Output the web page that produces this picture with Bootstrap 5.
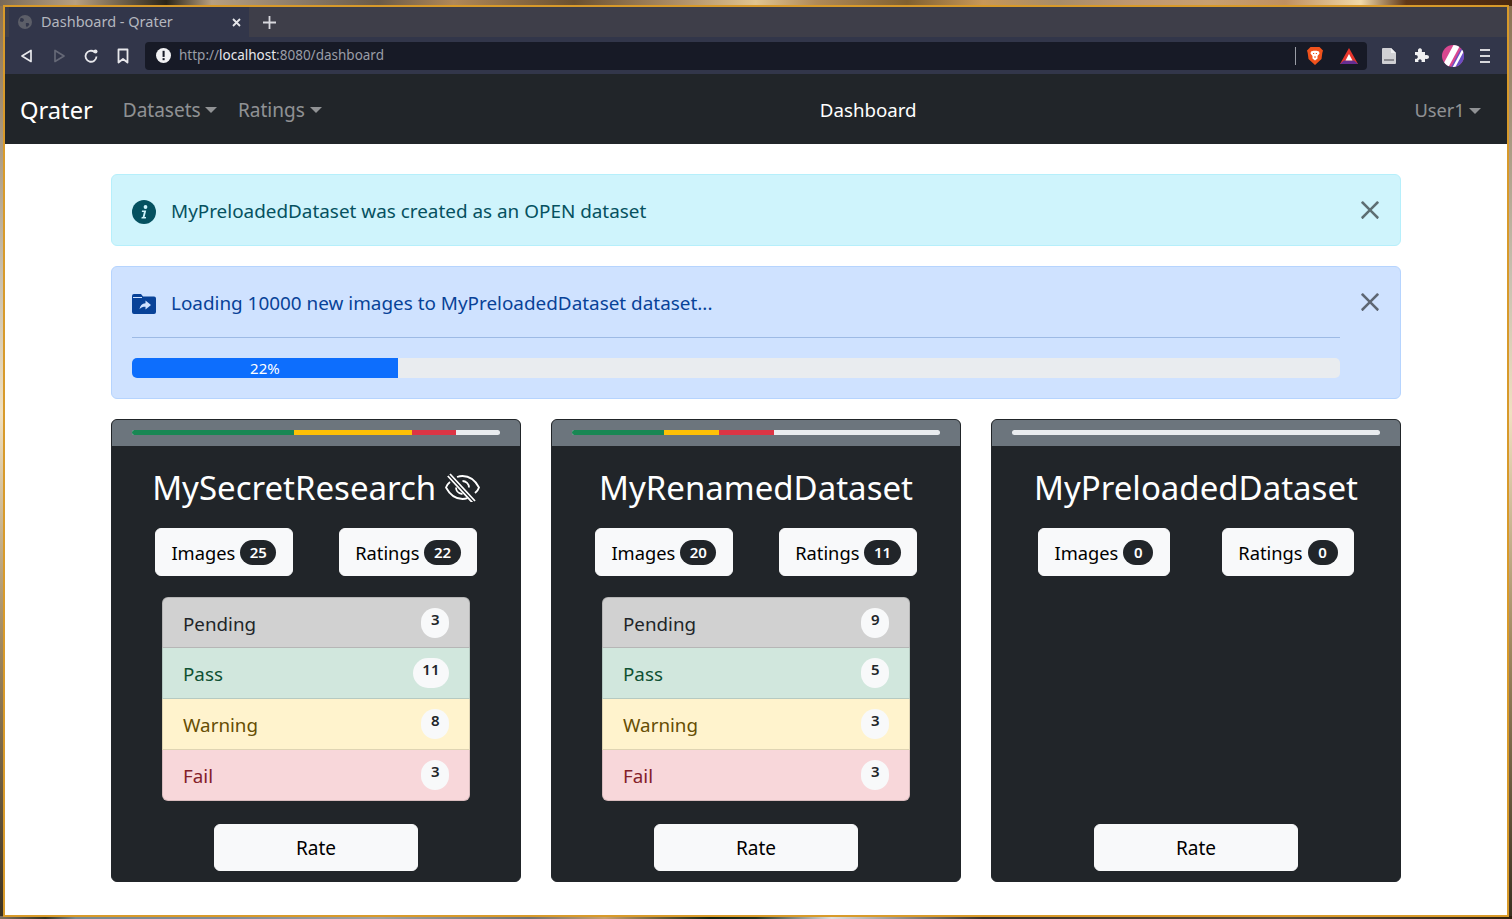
<!DOCTYPE html>
<html lang="en">
<head>
    <meta charset="UTF-8">
    <meta name="viewport" content="width=device-width, initial-scale=1.0">
    <title>Dashboard - Qrater</title>
    <link href="https://cdn.jsdelivr.net/npm/bootstrap@5.3.0/dist/css/bootstrap.min.css" rel="stylesheet">
    <style>
        html, body { height: 100%; }
        body {
            font-family: "Noto Sans", sans-serif;
            font-size: 19px;
            overflow: hidden;
            padding: 5px 3px 2px 3px;
            background:
                linear-gradient(90deg, #7a6a58 0%, #b8a080 5%, #2a2418 11%, #b8a080 14%, #8a7a68 20%, #6a5a48 25%, #b08858 30%, #6a5030 38%, #b09068 45%, #e0c490 50%, #b08a58 54%, #806030 60%, #c89858 65%, #a88c68 70%, #c09870 75%, #c8a070 80%, #c09060 85%, #f0d8a8 90%, #603818 93%, #4a2810 100%) top / 100% 6px no-repeat,
                linear-gradient(90deg, #807060 0%, #303020 3%, #7a8a90 5%, #808a98 15%, #a0a0a0 25%, #707070 35%, #c8a070 40%, #102010 47%, #203020 50%, #e0e0e0 55%, #3a3028 65%, #504030 75%, #605040 85%, #302010 100%) bottom / 100% 3px no-repeat,
                linear-gradient(180deg, #8a7050 0%, #c8c0b0 30%, #f0e0c0 45%, #a08860 70%, #3a3020 100%);
        }
        .app-window {
            height: 100%;
            border: 2px solid #d89a2a;
            background: #fff;
            overflow: hidden;
            display: flex;
            flex-direction: column;
        }
        .tab-strip { height: 30px; background: #3e3e49; }
        .tab-active {
            width: 240px; margin-left: 4px; padding: 0 8px 0 9px; height: 30px;
            background: #32364a; color: #b4b6bf; font-size: 14.5px;
        }
        .tab-new { width: 40px; }
        .tab-globe { margin-right: 9px; }
        .tool-bar { height: 37px; background: #32364a; padding: 0 17px 0 14px; }
        .url-box {
            height: 28px; background: #171a26; border-radius: 4px; color: #9a9da6;
            font-size: 13.5px; padding: 0 9px 0 11px; margin-left: 14px;
        }
        .url-box b { font-weight: 400; color: #e8e8ec; }
        .url-sep { width: 1px; height: 18px; background: #9a9da6; margin-right: 11px; }
        .ico-bat { margin-left: 17px; }
        .ico-page { margin-left: 15px; }
        .ico-puzzle { margin-left: 18px; }
        .ico-avatar { margin-left: 13px; }
        .ico-menu { margin-left: 16px; }
        .app-nav { height: 70px; padding: 2px 15px 0 15px; background: #212529; }
        .app-nav .navbar-brand { font-size: 23.7px; padding: 2px 0 0; margin-right: 20px; color: #fff; }
        .app-nav .nav-link { color: rgba(255,255,255,.5); padding: 0 10.5px 0 10px; font-size: 19px; }
        .app-nav .dropdown-toggle::after { vertical-align: .2em; border-top-width: .33em; border-left-width: .33em; border-right-width: .33em; }
        .app-nav .user-link { font-size: 18.3px; }
        .nav-title { color: #fff; font-size: 18.7px; }
        .page-wrap { width: 1290px; margin: 30px auto 0; }
        .note-box {
            font-size: 18.9px; border-radius: 6px; padding: 21px 20px 20px; margin-bottom: 20px; position: relative;
        }
        .note-box .btn-close { position: absolute; top: 25px; right: 20px; width: 20px; height: 20px; padding: 0; background-size: 20px; opacity: .55; }
        .note-info { height: 72px; background: #cff4fc; border: 1px solid #b6effb; color: #055160; }
        .note-load { background: #cfe2ff; border: 1px solid #b6d4fe; color: #084298; padding-right: 60px; }
        .note-text { line-height: 30px; gap: 15px; }
        .note-text svg { margin-top: 2px; }
        .note-load hr { margin: 19px 0 20px; color: #084298; opacity: .25; }
        .load-bar { height: 20px; font-size: 15px; border-radius: 5px; }
        .set-row { --bs-gutter-x: 30px; }
        .set-card { height: 463px; border-radius: 6px; background: #212529; border: 1px solid #212529; overflow: hidden; color: #fff; }
        .set-head { height: 26px; background: #6c757d; padding: 10px 20px 0; }
        .mini-bar { height: 5px; border-radius: 3px; background: #e9ecef; }
        .set-body { padding: 21px 20px 10px; flex: 1; }
        .set-title { font-size: 33px; font-weight: 400; text-align: center; line-height: 42px; margin: 0 0 19px; white-space: nowrap; }
        .eye-ico { vertical-align: -2px; }
        .stat-btn { font-size: 18.3px; height: 48px; padding: 2px 15.5px 0; display: flex; align-items: center; gap: 5px; }
        .stat-btn .badge { font-size: 15px; padding: 5px 9.5px; min-width: 30px; font-weight: 600; }
        .state-list { margin: 21px 30px 0; border-radius: 6px; }
        .state-list .list-group-item { height: 51px; font-size: 18.8px; line-height: 32px; padding: 10px 20px; display: flex; justify-content: space-between; align-items: flex-start; border-color: rgba(0,0,0,.125); }
        .state-list .state-pending { background: #d1d1d1; color: #212529; }
        .state-list .list-group-item-success { background: #d1e7dd; color: #0f5132; }
        .state-list .list-group-item-warning { background: #fff3cd; color: #664d03; }
        .state-list .list-group-item-danger { background: #f8d7da; color: #842029; }
        .state-list .badge { font-size: 15px; font-weight: 600; padding: 4px 9.5px 10px; border-radius: 15px; min-height: 30px; color: #212529 !important; }
        .rate-btn { width: 204px; height: 47px; font-size: 19px; padding-top: 8px; }
        .bi-svg { flex: none; }
    </style>
</head>
<body>
<div class="app-window">
    <div class="tab-strip d-flex align-items-center">
        <div class="tab-active d-flex align-items-center">
            <svg class="bi-svg tab-globe" width="14" height="14" viewBox="0 0 16 16"><circle cx="8" cy="8" r="8" fill="#5c5e68"/><path d="M3 3l3 1 1 2-2 2-3-1zM9 9l3 0 1 2-3 3-1-2z" fill="#32364a"/></svg>
            <span class="flex-grow-1">Dashboard - Qrater</span>
            <svg class="bi-svg" width="9" height="9" viewBox="0 0 9 9"><path d="M1 1l7 7M8 1L1 8" stroke="#e6e6ea" stroke-width="1.800"/></svg>
        </div>
        <div class="tab-new d-flex justify-content-center">
            <svg width="13" height="13" viewBox="0 0 13 13"><path d="M6.500 0v13M0 6.500h13" stroke="#d8d8de" stroke-width="1.800"/></svg>
        </div>
    </div>
    <div class="tool-bar d-flex align-items-center">
        <svg class="bi-svg me-3" width="16" height="16" viewBox="0 0 16 16"><path d="M12 2.500v11L3 8z" fill="none" stroke="#e8e8ec" stroke-width="1.700" stroke-linejoin="round"/></svg>
        <svg class="bi-svg me-3" width="16" height="16" viewBox="0 0 16 16"><path d="M4 2.500v11L13 8z" fill="none" stroke="#656876" stroke-width="1.700" stroke-linejoin="round"/></svg>
        <svg class="bi-svg me-3" width="16" height="16" viewBox="0 0 16 16"><path d="M13.500 8.500a5.500 5.500 0 1 1-2-4.500" fill="none" stroke="#e8e8ec" stroke-width="1.800"/><circle cx="12.500" cy="3.500" r="2" fill="#e8e8ec"/></svg>
        <svg class="bi-svg" width="16" height="16" viewBox="0 0 16 16"><path d="M3.500 1.500h9v13L8 11l-4.500 3.500z" fill="none" stroke="#e8e8ec" stroke-width="1.800" stroke-linejoin="round"/></svg>
        <div class="url-box flex-grow-1 d-flex align-items-center">
            <svg class="bi-svg me-2" width="15" height="15" viewBox="0 0 16 16"><circle cx="8" cy="8" r="8" fill="#f2f2f4"/><rect x="7" y="3" width="2.200" height="6.500" fill="#171a26"/><rect x="7" y="10.800" width="2.200" height="2.200" fill="#171a26"/></svg>
            <span class="flex-grow-1">http://<b>localhost</b>:8080/dashboard</span>
            <span class="url-sep"></span>
            <svg class="bi-svg" width="16" height="18" viewBox="0 0 16 18"><path d="M3.500 0h9L14.500 2 16 3.500l-.7 2.500-.8 6L8 18 1.500 12l-.8-6L0 3.500 1.500 2z" fill="#f0521c"/><path d="M4 4.500l2.500-.8h3L12 4.500l.5 2-2 2.500v2.500L8 13.500l-2.500-2V9l-2-2.500z" fill="#fff"/><path d="M6 6.500h1.200M8.800 6.500H10M7 10h2" stroke="#f0521c" stroke-width="1"/></svg>
            <svg class="bi-svg ico-bat" width="18" height="16" viewBox="0 0 18 16"><path d="M9 0l9 16H0z" fill="#e8362c"/><path d="M0 16l3.800-3.500h10.400L18 16z" fill="#662d91"/><path d="M9 6l3.500 6.500h-7z" fill="#fff"/></svg>
        </div>
        <svg class="bi-svg ico-page" width="14" height="16" viewBox="0 0 14 16"><path d="M0 1a1 1 0 0 1 1-1h8l5 5v10a1 1 0 0 1-1 1H1a1 1 0 0 1-1-1z" fill="#d0d0d4"/><path d="M9 0l5 5H9z" fill="#eeeef0"/><rect x="2" y="11" width="10" height="2" fill="#8a8a90"/></svg>
        <svg class="bi-svg ico-puzzle" width="15" height="15" viewBox="0 0 15 15"><path d="M1 4h3.200C3.500 1 5 .2 6 .2S8.500 1 7.800 4H11v3.200c2.500-.7 4 .3 4 1.800s-1.500 2.500-4 1.800V14H7.500c.7-2-.5-2.800-1.500-2.800S3.800 12 4.500 14H1v-3.200c1.800.5 2.800-.6 2.800-1.800S2.800 6.700 1 7.200z" fill="#f0f0f2"/></svg>
        <svg class="bi-svg ico-avatar" width="22" height="22" viewBox="0 0 22 22"><defs><clipPath id="avatarClip"><circle cx="11" cy="11" r="11"/></clipPath></defs><g clip-path="url(#avatarClip)"><rect width="22" height="22" fill="#d9478f"/><path d="M8 24L22 -2H30V24z" fill="#6a4fc4"/><path d="M2 24L16 -2" stroke="#fff" stroke-width="6"/><path d="M11 24L25 -2" stroke="#fff" stroke-width="2.400"/></g></svg>
        <svg class="bi-svg ico-menu" width="10" height="14" viewBox="0 0 10 14"><path d="M0 1h10M0 7h10M0 13h10" stroke="#d8d8dc" stroke-width="1.800"/></svg>
    </div>
    <nav class="navbar navbar-dark app-nav flex-nowrap">
        <div class="d-flex align-items-center">
            <a class="navbar-brand" href="#">Qrater</a>
            <a class="nav-link dropdown-toggle" href="#">Datasets</a>
            <a class="nav-link dropdown-toggle" href="#">Ratings</a>
        </div>
        <span class="nav-title">Dashboard</span>
        <a class="nav-link dropdown-toggle user-link" href="#">User1</a>
    </nav>
    <div class="page-wrap">
        <div class="note-box note-info">
            <button type="button" class="btn-close" aria-label="Close"></button>
            <div class="d-flex align-items-center note-text">
                <svg class="bi-svg" width="24" height="24" viewBox="0 0 24 24"><circle cx="12" cy="12" r="12" fill="#055160"/><circle cx="13.500" cy="7" r="1.900" fill="#cff4fc"/><path d="M10 10.500h4.200l-1.600 6.500h1.500l-.3 1.500H9.400l.3-1.500h1l1.200-5H9.800z" fill="#cff4fc"/></svg>
                <span>MyPreloadedDataset was created as an OPEN dataset</span>
            </div>
        </div>
        <div class="note-box note-load">
            <button type="button" class="btn-close" aria-label="Close"></button>
            <div class="d-flex align-items-center note-text">
                <svg class="bi-svg" width="24" height="20" viewBox="0 0 24 20"><path d="M2 0h7l2 2.500h11a2 2 0 0 1 2 2V18a2 2 0 0 1-2 2H2a2 2 0 0 1-2-2V2a2 2 0 0 1 2-2z" fill="#084298"/><path d="M1 3.500h9" stroke="#cfe2ff" stroke-width="1"/><path d="M13.500 6.500l5.500 4.500-5.500 4.500v-2.800c-2.500 0-4.300.6-6 2.500.4-3.500 2.500-5.700 6-6z" fill="#cfe2ff"/></svg>
                <span>Loading 10000 new images to MyPreloadedDataset dataset...</span>
            </div>
            <hr>
            <div class="progress load-bar">
                <div class="progress-bar" style="width:22%">22%</div>
            </div>
        </div>
        <div class="row set-row">
            <div class="col-4">
                <div class="set-card d-flex flex-column">
                    <div class="set-head"><div class="mini-bar d-flex overflow-hidden"><div class="bg-success" style="width:44%"></div><div class="bg-warning" style="width:32%"></div><div class="bg-danger" style="width:12%"></div></div></div>
                    <div class="set-body d-flex flex-column">
                        <h2 class="set-title">MySecretResearch <svg class="bi-svg eye-ico" width="35" height="29" viewBox="0 0 35 29" fill="none" stroke="#fff" stroke-width="1.800"><path d="M5 9C2.500 11 1.500 13 1 14.500 5 22 11 26 17.500 26c1.800 0 3.400-.3 5-.8M30 20c2-1.800 3.500-3.700 4-5.500C30 7 24 3 17.500 3c-2 0-3.800.4-5.500 1"/><path d="M11 14.500c0 2.300 1.500 6 6.500 6.500M24 14.500C24 11 21 8 17.500 8"/><path d="M5 1l25 27M2.800 3l25 27"/></svg></h2>
                        <div class="d-flex justify-content-around">
                            <button class="btn btn-light stat-btn">Images <span class="badge rounded-pill text-bg-dark">25</span></button>
                            <button class="btn btn-light stat-btn">Ratings <span class="badge rounded-pill text-bg-dark">22</span></button>
                        </div>
                        <ul class="list-group state-list">
                            <li class="list-group-item state-pending">Pending <span class="badge text-bg-light">3</span></li>
                            <li class="list-group-item list-group-item-success">Pass <span class="badge text-bg-light">11</span></li>
                            <li class="list-group-item list-group-item-warning">Warning <span class="badge text-bg-light">8</span></li>
                            <li class="list-group-item list-group-item-danger">Fail <span class="badge text-bg-light">3</span></li>
                        </ul>
                        <button class="btn btn-light rate-btn mt-auto mx-auto">Rate</button>
                    </div>
                </div>
            </div>
            <div class="col-4">
                <div class="set-card d-flex flex-column">
                    <div class="set-head"><div class="mini-bar d-flex overflow-hidden"><div class="bg-success" style="width:25%"></div><div class="bg-warning" style="width:15%"></div><div class="bg-danger" style="width:15%"></div></div></div>
                    <div class="set-body d-flex flex-column">
                        <h2 class="set-title">MyRenamedDataset</h2>
                        <div class="d-flex justify-content-around">
                            <button class="btn btn-light stat-btn">Images <span class="badge rounded-pill text-bg-dark">20</span></button>
                            <button class="btn btn-light stat-btn">Ratings <span class="badge rounded-pill text-bg-dark">11</span></button>
                        </div>
                        <ul class="list-group state-list">
                            <li class="list-group-item state-pending">Pending <span class="badge text-bg-light">9</span></li>
                            <li class="list-group-item list-group-item-success">Pass <span class="badge text-bg-light">5</span></li>
                            <li class="list-group-item list-group-item-warning">Warning <span class="badge text-bg-light">3</span></li>
                            <li class="list-group-item list-group-item-danger">Fail <span class="badge text-bg-light">3</span></li>
                        </ul>
                        <button class="btn btn-light rate-btn mt-auto mx-auto">Rate</button>
                    </div>
                </div>
            </div>
            <div class="col-4">
                <div class="set-card d-flex flex-column">
                    <div class="set-head"><div class="mini-bar"></div></div>
                    <div class="set-body d-flex flex-column">
                        <h2 class="set-title">MyPreloadedDataset</h2>
                        <div class="d-flex justify-content-around">
                            <button class="btn btn-light stat-btn">Images <span class="badge rounded-pill text-bg-dark">0</span></button>
                            <button class="btn btn-light stat-btn">Ratings <span class="badge rounded-pill text-bg-dark">0</span></button>
                        </div>
                        <button class="btn btn-light rate-btn mt-auto mx-auto">Rate</button>
                    </div>
                </div>
            </div>
        </div>
    </div>
</div>
<script src="https://cdn.jsdelivr.net/npm/bootstrap@5.3.0/dist/js/bootstrap.bundle.min.js"></script>
</body>
</html>
